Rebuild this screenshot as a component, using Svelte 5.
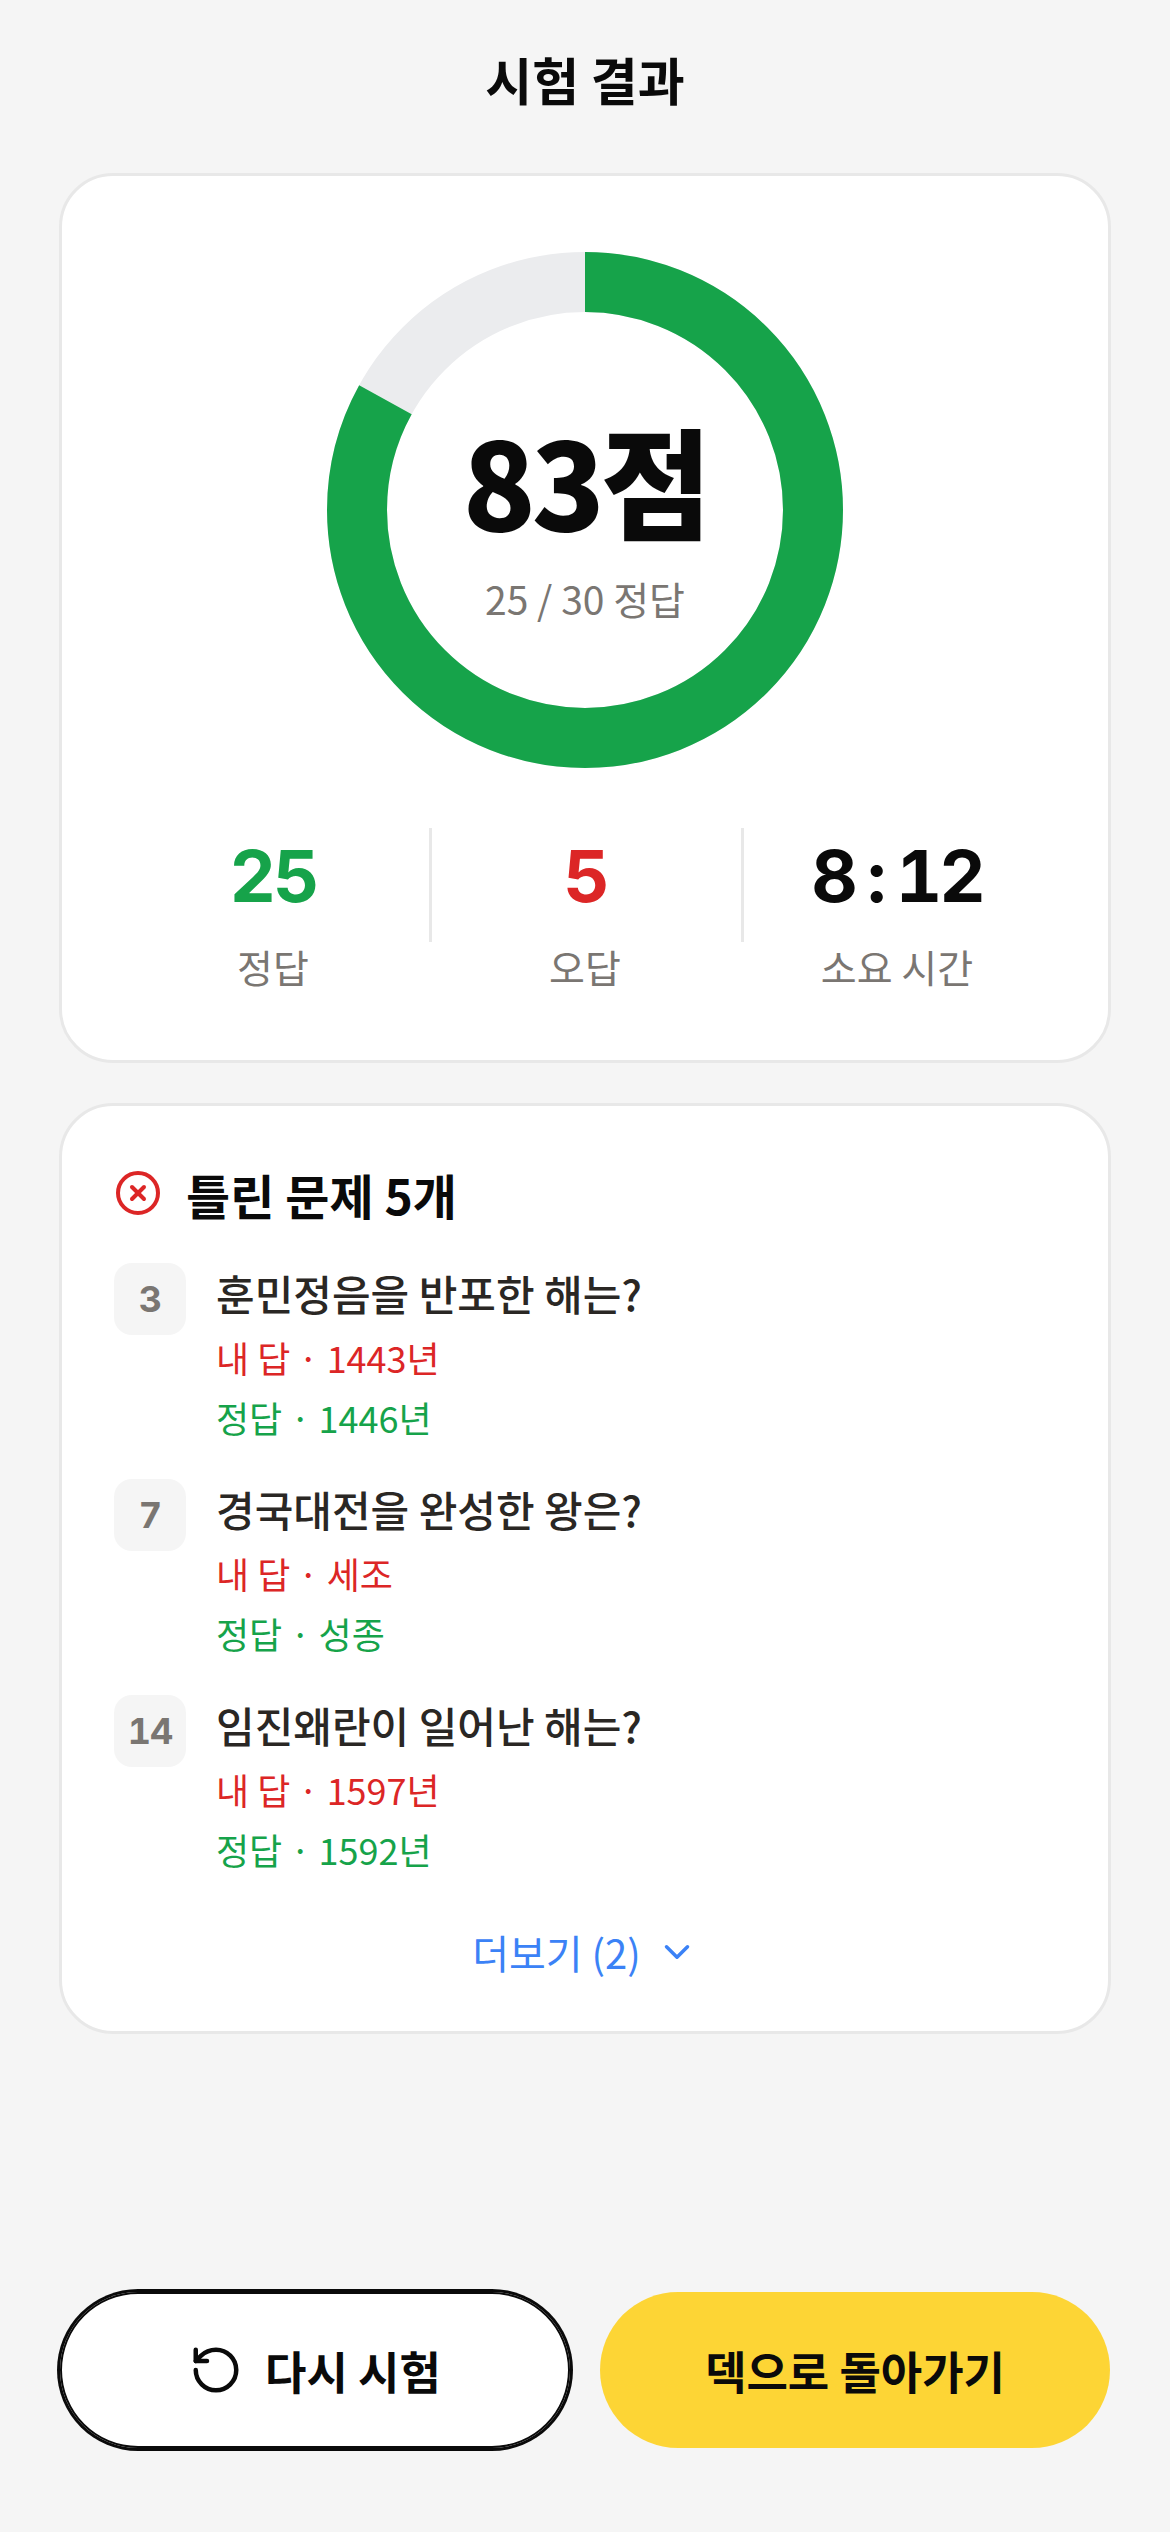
<script>
  const stats = [
    { value: '25', label: '정답', tone: 'ok' },
    { value: '5', label: '오답', tone: 'bad' },
    { value: '8 : 12', label: '소요 시간', tone: '' }
  ];
  const wrong = [
    { n: 3, q: '훈민정음을 반포한 해는?', mine: '1443년', right: '1446년' },
    { n: 7, q: '경국대전을 완성한 왕은?', mine: '세조', right: '성종' },
    { n: 14, q: '임진왜란이 일어난 해는?', mine: '1597년', right: '1592년' }
  ];
  const r = 228;
  const c = 2 * Math.PI * r;
  const dash = 0.83 * c;
</script>

<div class="page">
  <h1>시험 결과</h1>

  <section class="card score">
    <div class="donut">
      <svg viewBox="0 0 516 516" width="516" height="516">
        <circle cx="258" cy="258" r={r} fill="none" stroke="#ebecee" stroke-width="60" />
        <circle cx="258" cy="258" r={r} fill="none" stroke="#16a34a" stroke-width="60"
          stroke-dasharray="{dash} {c}" transform="rotate(-90 258 258)" />
      </svg>
      <div class="center">
        <div class="big">83점</div>
        <div class="sub">25 / 30 정답</div>
      </div>
    </div>
    <div class="stats">
      {#each stats as s}
        <div class="stat">
          <div class="val {s.tone}">{s.value}</div>
          <div class="lab">{s.label}</div>
        </div>
      {/each}
    </div>
  </section>

  <section class="card list">
    <div class="head">
      <svg class="xicon" viewBox="0 0 24 24" width="48" height="48" fill="none" stroke="#dc2626" stroke-width="2" stroke-linecap="round" stroke-linejoin="round">
        <circle cx="12" cy="12" r="10" />
        <path d="m15 9-6 6" />
        <path d="m9 9 6 6" />
      </svg>
      <h2>틀린 문제 5개</h2>
    </div>
    {#each wrong as w}
      <div class="item">
        <div class="badge">{w.n}</div>
        <div class="body">
          <div class="q">{w.q}</div>
          <div class="a bad">내 답 · {w.mine}</div>
          <div class="a ok">정답 · {w.right}</div>
        </div>
      </div>
    {/each}
    <div class="more">
      <span>더보기 (2)</span>
      <svg viewBox="0 0 24 24" width="42" height="42" fill="none" stroke="#3b82f6" stroke-width="2" stroke-linecap="round" stroke-linejoin="round">
        <path d="m6 9 6 6 6-6" />
      </svg>
    </div>
  </section>

  <div class="actions">
    <button class="btn outline">
      <svg viewBox="0 0 24 24" width="54" height="54" fill="none" stroke="#0a0a0a" stroke-width="2" stroke-linecap="round" stroke-linejoin="round">
        <path d="M3 12a9 9 0 1 0 9-9 9.75 9.75 0 0 0-6.74 2.74L3 8" />
        <path d="M3 3v5h5" />
      </svg>
      <span>다시 시험</span>
    </button>
    <button class="btn solid"><span>덱으로 돌아가기</span></button>
  </div>
</div>

<style>
  :global(body) {
    margin: 0;
    background: #f5f5f5;
  }
  .page {
    box-sizing: border-box;
    width: 1170px;
    height: 2532px;
    padding: 0 60px 84px;
    display: flex;
    flex-direction: column;
    font-family: "Noto Sans CJK KR", "Noto Sans", sans-serif;
    color: #0a0a0a;
  }
  h1 {
    margin: 0;
    height: 173px;
    box-sizing: border-box;
    padding-top: 40px;
    font-size: 51px;
    line-height: 78px;
    font-weight: 700;
    text-align: center;
  }
  .card {
    box-sizing: border-box;
    background: #fff;
    border: 3px solid #e8e8e8;
    border-radius: 54px;
    margin-left: -1px;
    margin-right: -1px;
  }
  .score {
    height: 890px;
    padding: 76px 55px 0;
    display: flex;
    flex-direction: column;
    align-items: center;
  }
  .donut {
    position: relative;
    width: 516px;
    height: 516px;
  }
  .donut svg {
    display: block;
  }
  .center {
    position: absolute;
    inset: 0;
    display: flex;
    flex-direction: column;
    align-items: center;
    justify-content: center;
  }
  .big {
    font-size: 120px;
    line-height: 160px;
    font-weight: 900;
    letter-spacing: -4px;
    margin-top: 6px;
  }
  .sub {
    font-size: 39px;
    line-height: 60px;
    color: #7a7672;
    margin-top: 9px;
  }
  .stats {
    width: 100%;
    margin-top: 60px;
    display: grid;
    grid-template-columns: repeat(3, 1fr);
  }
  .stat {
    position: relative;
    text-align: center;
  }
  .stat:not(:last-child)::after {
    content: "";
    position: absolute;
    right: -3px;
    top: 0;
    width: 3px;
    height: 114px;
    background: #e8e8e8;
  }
  .val {
    font-family: "Inter", sans-serif;
    font-variant-numeric: tabular-nums;
    font-size: 72px;
    line-height: 84px;
    font-weight: 700;
    letter-spacing: -3px;
    word-spacing: -4px;
    margin-top: 6px;
  }
  .lab {
    font-size: 39px;
    line-height: 60px;
    color: #7a7672;
    margin-top: 18px;
  }
  .ok { color: #16a34a; }
  .bad { color: #dc2626; }
  .list {
    margin-top: 40px;
    height: 931px;
    padding: 60px 52px 0;
  }
  .head {
    display: flex;
    align-items: center;
    gap: 24px;
    height: 60px;
    margin-bottom: 37px;
  }
  .xicon {
    flex: none;
    margin-top: -6px;
  }
  h2 {
    margin: -5px 0 0;
    font-size: 48px;
    line-height: 60px;
    font-weight: 700;
  }
  .item {
    display: flex;
    gap: 30px;
    margin-bottom: 32px;
  }
  .badge {
    flex: none;
    width: 72px;
    height: 72px;
    border-radius: 18px;
    background: #f5f5f5;
    color: #7a7672;
    font-family: "Inter", sans-serif;
    font-variant-numeric: tabular-nums;
    font-weight: 700;
    font-size: 36px;
    letter-spacing: -1px;
    display: flex;
    align-items: center;
    justify-content: center;
  }
  .q {
    font-size: 42px;
    line-height: 60px;
    font-weight: 500;
    color: #2a2724;
    margin: 0 0 4px;
  }
  .a {
    font-size: 36px;
    line-height: 60px;
  }
  .more {
    display: flex;
    align-items: center;
    justify-content: center;
    gap: 15px;
    color: #3b82f6;
    font-size: 40px;
    line-height: 60px;
    margin-top: 43px;
  }
  .actions {
    margin-top: auto;
    display: flex;
    gap: 30px;
  }
  .btn {
    flex: 1;
    height: 156px;
    border: none;
    border-radius: 78px;
    font-family: inherit;
    font-size: 45px;
    font-weight: 700;
    color: #0a0a0a;
    display: flex;
    align-items: center;
    justify-content: center;
    gap: 22px;
    padding: 0;
  }
  .outline {
    background: #fff;
    box-shadow: 0 0 0 3px #0a0a0a, inset 0 0 0 2px #0a0a0a;
  }
  .solid {
    background: #fdd535;
  }
</style>
